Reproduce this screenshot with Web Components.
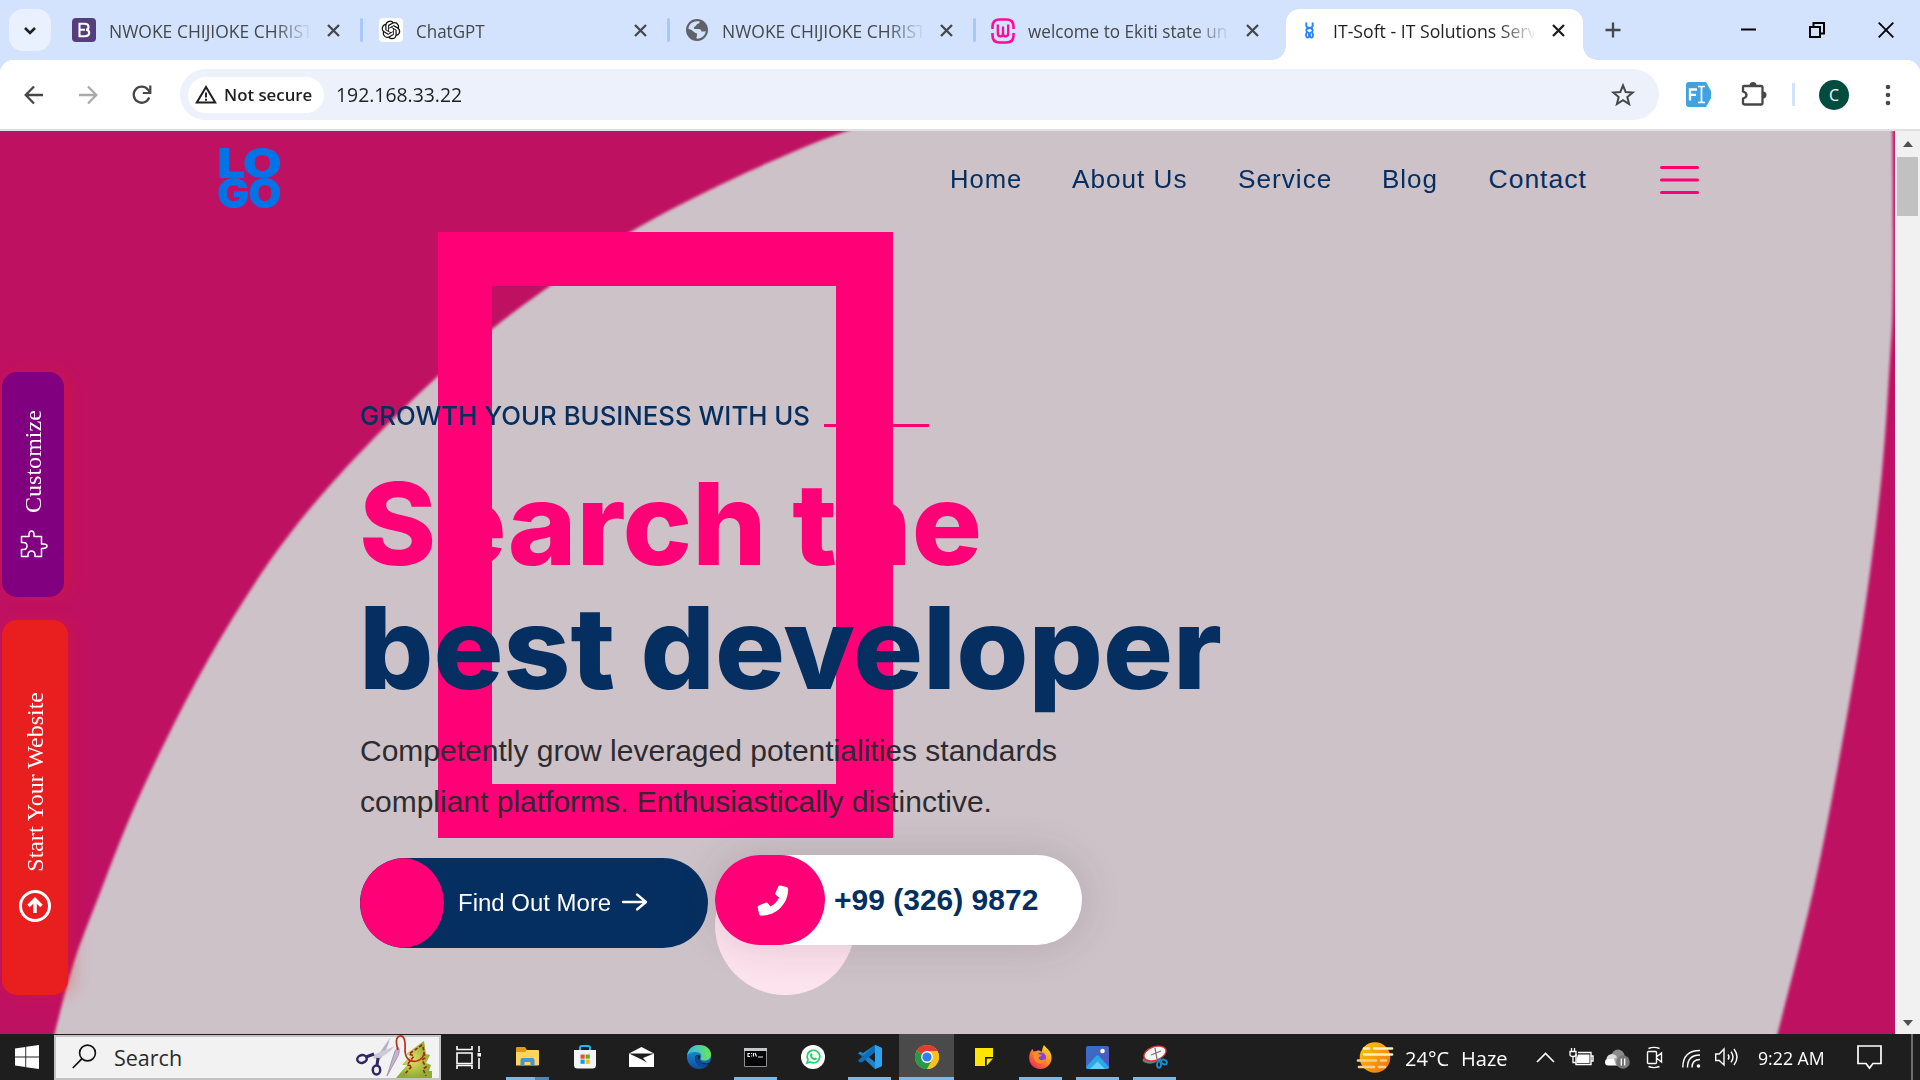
<!DOCTYPE html>
<html lang="en">
<head>
<meta charset="utf-8">
<title>IT-Soft - IT Solutions Services</title>
<style>
html,body{margin:0;width:1920px;height:1080px;overflow:hidden;background:#fff}
</style>
</head>
<body>
<desktop-screen></desktop-screen>
<script>
const define=(name,html,setup)=>customElements.define(name,class extends HTMLElement{
  connectedCallback(){
    if(this.shadowRoot)return;
    const t=document.createElement('template');
    t.innerHTML=typeof html==='function'?html(this):html;
    this.attachShadow({mode:'open'}).append(t.content.cloneNode(true));
    if(setup)setup(this,this.shadowRoot);
  }
});

/* Single line of text stretched to a known advance width. */
define('fit-text',`<style>:host{display:block;flex:none;white-space:nowrap}span{display:inline-block;transform-origin:0 50%}</style><span><slot></slot></span>`,
(el,root)=>{
  const w=+el.getAttribute('w');
  el.style.width=w+'px';
  const s=root.querySelector('span');
  s.style.transform=`scaleX(${w/s.offsetWidth})`;
});

const STROKE='fill="none" stroke="currentColor"';
const ICONS={
 chevron:[14,9,`<path d="M2 2l5 5 5-5" ${STROKE} stroke-width="2.6"/>`],
 close:[13,13,`<path d="M1 1l11 11M12 1L1 12" ${STROKE} stroke-width="2.3"/>`],
 boot:[24,24,`<rect width="24" height="24" rx="4" fill="#563d7c"/><path d="M7.5 5.8h5.2c5 0 4.700 5.500 1.400 5.900 4.400.5 4.200 6.500-1 6.500H7.500zM7.500 11.800h5.500" fill="none" stroke="#fff" stroke-width="2.100"/>`],
 gpt:[24,24,`<rect width="24" height="24" rx="4" fill="#fff"/><path transform="translate(2.600 2.600) scale(.78)" fill="#111" d="M22.2819 9.8211a5.9847 5.9847 0 0 0-.5157-4.9108 6.0462 6.0462 0 0 0-6.5098-2.9A6.0651 6.0651 0 0 0 4.9807 4.1818a5.9847 5.9847 0 0 0-3.9977 2.9 6.0462 6.0462 0 0 0 .7427 7.0966 5.98 5.98 0 0 0 .511 4.9107 6.051 6.051 0 0 0 6.5146 2.9001A5.9847 5.9847 0 0 0 13.2599 24a6.0557 6.0557 0 0 0 5.7718-4.2058 5.9894 5.9894 0 0 0 3.9977-2.9001 6.0557 6.0557 0 0 0-.7475-7.0729zm-9.022 12.6081a4.4755 4.4755 0 0 1-2.8764-1.0408l.1419-.0804 4.7783-2.7582a.7948.7948 0 0 0 .3927-.6813v-6.7369l2.02 1.1686a.071.071 0 0 1 .038.052v5.5826a4.504 4.504 0 0 1-4.4945 4.4944zm-9.6607-4.1254a4.4708 4.4708 0 0 1-.5346-3.0137l.142.0852 4.783 2.7582a.7712.7712 0 0 0 .7806 0l5.8428-3.3685v2.3324a.0804.0804 0 0 1-.0332.0615L9.74 19.9502a4.4992 4.4992 0 0 1-6.1408-1.6464zM2.3408 7.8956a4.485 4.485 0 0 1 2.3655-1.9728V11.6a.7664.7664 0 0 0 .3879.6765l5.8144 3.3543-2.0201 1.1685a.0757.0757 0 0 1-.071 0l-4.8303-2.7865A4.504 4.504 0 0 1 2.3408 7.8956zm16.5963 3.8558L13.1038 8.364 15.1192 7.2a.0757.0757 0 0 1 .071 0l4.8303 2.7913a4.4944 4.4944 0 0 1-.6765 8.1042v-5.6772a.79.79 0 0 0-.407-.667zm2.0107-3.0231l-.142-.0852-4.7735-2.7818a.7759.7759 0 0 0-.7854 0L9.409 9.2297V6.8974a.0662.0662 0 0 1 .0284-.0615l4.8303-2.7866a4.4992 4.4992 0 0 1 6.6802 4.66zM8.3065 12.863l-2.02-1.1638a.0804.0804 0 0 1-.038-.0567V6.0742a4.4992 4.4992 0 0 1 7.3757-3.4537l-.142.0805L8.704 5.459a.7948.7948 0 0 0-.3927.6813zm1.0976-2.3654l2.602-1.4998 2.6069 1.4998v2.9994l-2.5974 1.4997-2.6067-1.4997Z"/>`],
 globe:[22,22,`<circle cx="11" cy="11" r="11" fill="#5f6368"/><path d="M2.500 10c0-4 3.500-7.700 8.500-7.700h2.500c.5 1.700-.5 2.200-2 2.700-1.500.5-1 2-2.500 2.500S7.500 9 8.500 10h4c2 0 3 1 3 2.500h2.500c1 0 1.500-.5 1.700-1.500C20 16 16 19.700 11 19.700c-1-.7-.5-2.200 0-2.700v-2.500c-1 0-2-1-3-1.500S5.500 10 2.500 10z" fill="#d3e3fd"/>`],
 wlogo:[24,26,`<g fill="none" stroke="#ff0a9c" stroke-width="2.600"><path d="M1.500 11V8.500Q1.500 1.500 8.500 1.500h7q7 0 7 7V11M1.500 15v2.500q0 7 7 7h7q7 0 7-7V15"/><path d="M6.800 6.500V15q0 3.500 2.600 3.500T12 15V8.500V15q0 3.500 2.600 3.500T17.200 15V6.500" stroke-width="2.300"/></g>`],
 itsoft:[9,17,`<g fill="none" stroke="#2a86ef" stroke-width="1.900"><path d="M1.300.500v3.200q0 1.800 3.200 2.300T7.700 8.300Q7.500 10 6.200 10M7.700.500v3.200q0 1.800-3.200 2.300T1.300 8.300Q1.500 10 2.800 10"/><ellipse cx="2.600" cy="13" rx="1.500" ry="2.600"/><ellipse cx="6.400" cy="13" rx="1.500" ry="2.600"/></g>`],
 plus:[16,16,`<path d="M8 0.500v15M0.500 8h15" ${STROKE} stroke-width="2.300"/>`],
 min:[15,15,`<path d="M0 7.500h15" ${STROKE} stroke-width="2"/>`],
 restore:[16,16,`<path d="M1 5h10v10H1zM4.500 4.500V1H15v10.500h-3.500" ${STROKE} stroke-width="2"/>`],
 winclose:[16,16,`<path d="M.7.700l14.600 14.600M15.300.700L.700 15.300" ${STROKE} stroke-width="1.900"/>`],
 back:[20,20,`<path d="M19 10H2M10 1.500L1.700 10l8.300 8.500" ${STROKE} stroke-width="2.300"/>`],
 fwd:[20,20,`<path d="M1 10h17M10 1.500l8.300 8.500-8.300 8.500" ${STROKE} stroke-width="2.300"/>`],
 reload:[20,20,`<path d="M17.200 12.500A8 8 0 1 1 15.800 4.500L18 7" ${STROKE} stroke-width="2.300"/><path d="M18.300.500v7.500h-7.500" ${STROKE} stroke-width="2.200"/>`],
 warn:[22,19,`<path d="M11 2L1.800 17.500h18.400z" ${STROKE} stroke-width="2"/><path d="M11 7.500v5M11 13.700v2" ${STROKE} stroke-width="1.900"/>`],
 star:[24,23,`<path d="M12 2.500l2.700 6.600 7 .5-5.400 4.500 1.800 6.900L12 17.200 5.900 21l1.800-6.900L2.300 9.600l7-.5z" ${STROKE} stroke-width="2"/>`],
 fi:[25,25,`<path d="M3 0h17l5 9v7l-5 9H3q-3 0-3-3V3q0-3 3-3z" fill="#41a2e1"/><path d="M4 18.500V7.500h7M4 12.800h6" fill="none" stroke="#fff" stroke-width="2.300"/><path d="M12 4.500h2q1.500 0 1.500 2v12q0 2-1.500 2h-2M19 4.500h-2q-1.500 0-1.500 2M19 20.500h-2q-1.500 0-1.500-2" fill="none" stroke="#fff" stroke-width="1.700"/>`],
 ext:[26,26,`<path d="M3 5h17q1.500 0 1.500 1.500V22q0 1.500-1.500 1.500H4q-2 0-2-1.500v-4.500q3.500-1 3.500-3.500T2 10.500V6q0-1 1-1z" ${STROKE} stroke-width="2.300"/><path d="M8.500 4.500a3.500 3.500 0 0 1 7 0zM22 10.500a3.500 3.500 0 0 1 0 7z" fill="currentColor"/>`],
 dots:[6,22,`<circle cx="3" cy="3" r="2.300" fill="currentColor"/><circle cx="3" cy="11" r="2.300" fill="currentColor"/><circle cx="3" cy="19" r="2.300" fill="currentColor"/>`],
 burger:[40,28,`<g fill="#ff0076"><rect y="0" width="39" height="3" rx="1.500"/><rect y="12.500" width="39" height="3" rx="1.500"/><rect y="25" width="39" height="3" rx="1.500"/></g>`],
 puzzle:[28,28,`<path d="M1.500 6.500H9V4.500q0-3.500 2.500-3.500t2.500 3.500v2h7.500V14h2q3.500 0 3.500 2t-3.500 2.500h-2v8H15v-2q-.5-3.500-3.500-3.500T8 24.500v2H1.500v-7h2q3.500 0 3.500-3.500t-3.500-3.500h-2z" ${STROKE} stroke-width="1.500" stroke-linejoin="round"/>`],
 up:[32,32,`<circle cx="16" cy="16" r="14.500" ${STROKE} stroke-width="3"/><path d="M16 23V10M9.500 16L16 9.500l6.500 6.500" ${STROKE} stroke-width="3.500"/>`],
 arrow:[26,20,`<path d="M1 10h22M15 2.500l9 7.500-9 7.500" ${STROKE} stroke-width="2.300" stroke-linecap="round" stroke-linejoin="round"/>`],
 phone:[32,31,`<path d="M23.500.600L29.500 2q1.700.500 1.700 2.200C31 19 19.500 30.500 4.200 30.700q-1.700 0-2.100-1.700L.700 22.700q-.300-1.500 1.200-2.200l6.700-2.800q1.300-.500 2.300.600l2.500 3.200c4-2 7-5 8.700-8.900l-3.100-2.500q-1.100-1-.500-2.300L21.300 1.600q.700-1.300 2.200-1z" fill="#fff"/>`],
 win:[24,24,`<path d="M0 3.500L10.300 2v9.500H0zM11.200 1.800L24 0v11.500H11.200zM0 12.400h10.300V22L0 20.500zM11.200 12.400H24V24l-12.800-1.800z" fill="#fff"/>`],
 mag:[25,25,`<circle cx="15.500" cy="9" r="7.900" fill="none" stroke="#111" stroke-width="1.600"/><path d="M10 14.600L.800 24" stroke="#111" stroke-width="1.700"/>`],
 xmas:[80,44,`<defs><radialGradient id="t" cx=".45" cy=".5"><stop offset="0" stop-color="#e6de68"/><stop offset="1" stop-color="#8fae2e"/></radialGradient></defs>
  <path d="M68 6l-18 13 4 2-8 9 5 0-11 13h36l0-7-3 0 2-6-5-2 4-8-4-1z" fill="url(#t)"/><path d="M66 10l-13 9 5 2-7 9 5 1-8 9M67 12l2 11-3 2 4 7-3 2 3 7" fill="none" stroke="#a02318" stroke-width="1.600" stroke-dasharray="3.500 2"/>
  <path d="M34 3L20 23l3 3Q31 16 34 3z" fill="#b3b1c4"/><path d="M39 11L17 20l1 4Q30 22 39 11z" fill="#cccad8"/><ellipse cx="6" cy="24" rx="4.800" ry="3.800" fill="none" stroke="#302767" stroke-width="2.500" transform="rotate(-15 6 24)"/><ellipse cx="20.500" cy="35" rx="3.700" ry="4.500" fill="none" stroke="#302767" stroke-width="2.500"/><path d="M10 22l8-3M21 30l1-7" stroke="#302767" stroke-width="3"/>
  <path d="M42 12q2.500 3 0 9L31 41l6-19q2-8 5-10z" fill="#c6b3cf" stroke="#8f7ba0" stroke-width=".7"/><path d="M42 15Q38 2 44 1t5 15q1 12 12 10 7-2 7-9" fill="none" stroke="#c22a20" stroke-width="1.700"/>`],
 taskview:[25,23,`<g fill="none" stroke="#fff" stroke-width="1.600"><path d="M1 0v3.500h15V0M1 7h15v10.500H1zM1 23v-3.500h15V23M23 0v6M23 12v11"/></g><rect x="21.500" y="7" width="3.500" height="3.500" fill="#fff"/>`],
 folder:[24,20,`<path d="M0 1q0-1 1-1h8l2 3h11v5H0z" fill="#e29a12"/><path d="M0 5h9l2-2h11q1 0 1 1v13.500q0 1-1 1H0z" fill="#ffd35c"/><path d="M4.500 18.500V13q0-2 2-2h10q2 0 2 2v5.500h-4V15h-6v3.500z" fill="#3f96dc"/>`],
 store:[24,24,`<path d="M7 7V3q0-2 2-2h6q2 0 2 2v4" fill="none" stroke="#23b7ee" stroke-width="2"/><path d="M1 5h22v15q0 3.500-3.500 3.500h-15Q1 23.500 1 20z" fill="#f4f4f5"/><path d="M7.500 9.500h4.200v4.200H7.500z" fill="#f25022"/><path d="M12.600 9.500h4.200v4.200h-4.200z" fill="#5fb21c"/><path d="M7.500 14.600h4.200v4.200H7.500z" fill="#00a4ef"/><path d="M12.600 14.600h4.200v4.200h-4.200z" fill="#ffb900"/>`],
 mail:[25,20,`<path d="M0 6.500L12.500 0 25 6.500V20H0z" fill="#fff"/><path d="M0 6.500h25L14 11l4 4.500L11.500 12z" fill="#1e1e1e"/>`],
 edge:[24,24,`<defs><linearGradient id="e1"><stop stop-color="#33b8e8"/><stop offset="1" stop-color="#6be35c"/></linearGradient><linearGradient id="e2" y2="1" x2="0"><stop stop-color="#1b9de2"/><stop offset="1" stop-color="#0d4f9f"/></linearGradient></defs><circle cx="12" cy="12" r="12" fill="url(#e2)"/><path d="M0 11C1 3 7 0 12 0c8 0 12 5 12 9.500 0 4-3 6-6.500 6S13 14 14 12.500c1-2.500-.5-5.500-5-5.500S1 8.500 0 11z" fill="url(#e1)"/><path d="M8 13c0 5 4 9 9 8.500 2-.2 4-1.200 5-2.500l1-2c-3 2-8 1.500-10-1-1.500-2 1-3.500 0-5.500-2-1.500-5-.5-5 2.500z" fill="#1e1e1e" opacity=".9"/><path d="M8 13c0 5 4 9 9 8.500 2-.2 4-1.200 5-2.500-3 1-7 0-9-2.500S10 12 12 10c-2 0-4 1-4 3z" fill="#104a91"/>`],
 cmd:[23,19,`<rect width="23" height="19" rx="1" fill="#8b8d90"/><rect x="0" width="23" height="3" fill="#c4c6c9"/><rect x="1" y="3" width="21" height="15" fill="#050505"/><path d="M6 5.500H4v3h2M7.500 5v1M7.500 7.500v1M9.500 5v3.500M11 5l1.500 3.500M14 9h5" fill="none" stroke="#eee" stroke-width="1.200"/>`],
 wa:[24,24,`<circle cx="12" cy="12" r="12" fill="#fff"/><path d="M6 18l1-3.300A6.300 6.300 0 1 1 9.300 17z" fill="none" stroke="#25d366" stroke-width="1.700"/><path d="M9.700 8.500q1-1 1.500.5l.4 1-.7 1q.8 1.700 2.400 2.300l1-.9 1.700.9q-.2 2-2.200 1.900-4.300-.7-4.900-4.700z" fill="#25d366"/>`],
 vscode:[24,24,`<path d="M17 0l6 2.500q1 .5 1 1.500v16q0 1-1 1.500L17 24 2.500 10.500 0 8.500l2-2L5 8z" fill="#1a85cd"/><path d="M17 0v24l6-2.500q1-.5 1-1.500V4q0-1-1-1.500z" fill="#2aa5f3"/><path d="M17 7v10l-6.500-5z" fill="#1e1e1e"/><path d="M2 17.500L0 15.500 17 0v7L4.500 17z" fill="#0b6fb8"/><path d="M1 9L6.500 12 2.500 10.500z" fill="#1e1e1e"/>`],
 chrome:[24,24,`<circle cx="12" cy="12" r="12" fill="#fbc116"/><path d="M12 12L1.600 6A12 12 0 0 1 22.400 6H12z" fill="#e33b2e"/><path d="M12 12L1.600 6A12 12 0 0 0 12 24l5.200-9z" fill="#269a48"/><path d="M12 6h10.400A12 12 0 0 1 12 24l5.200-9z" fill="#fbc116"/><circle cx="12" cy="12" r="5.900" fill="#fff"/><circle cx="12" cy="12" r="4.600" fill="#317cf3"/>`],
 sticky:[18,18,`<path d="M0 0h18v9h-8v9H0z" fill="#ffe500"/><path d="M11.500 10.500H18L11.500 18z" fill="#ffe500"/><path d="M10 9h8l-6.500 1.500V18H10z" fill="#111"/>`],
 firefox:[23,24,`<defs><linearGradient id="f" x1="1" x2=".2" y2="1"><stop stop-color="#fff03f"/><stop offset=".45" stop-color="#ff9a1f"/><stop offset="1" stop-color="#f5245c"/></linearGradient></defs><path d="M15 0c1 2 5 4 7 9 2.500 8-3 15-10.500 15S-.5 18 .2 11C.6 8 2 5.500 3.500 4l1 2.500L7.500 6c2-1 4 0 5 1 1-2 1-5 2.500-7z" fill="url(#f)"/><circle cx="12" cy="12.500" r="5" fill="#7b45d6"/><path d="M4 8c3-1 5 0 6 1.500L13 10c-1 1.500-3 1.500-3.500 3 .5 2.500 5 3 6.500.5C16 18 12 19.500 9 18c-3-1-5-5-5-10z" fill="#ff8a2a"/>`],
 photos:[23,23,`<defs><linearGradient id="p" y2="1"><stop stop-color="#3373c9"/><stop offset="1" stop-color="#5c4fb7"/></linearGradient></defs><rect width="23" height="23" rx="2" fill="url(#p)"/><path d="M0 21L10 10q1.500-1.500 3 0l10 11q0 2-2 2H2q-2 0-2-2z" fill="#28a9e8"/><path d="M4 23l7.500-7.500L19 23z" fill="#65d2f5"/><circle cx="16.500" cy="5" r="2.300" fill="#fff"/>`],
 snip:[26,24,`<ellipse cx="8" cy="15" rx="7.500" ry="3.700" fill="#777"/><ellipse cx="13" cy="8.500" rx="11.500" ry="6.700" fill="#f5f5f5" stroke="#d33a35" stroke-width="1.300" transform="rotate(-20 13 8.500)"/><path d="M9 10l10-4M13 3l2 11" stroke="#777" stroke-width="1.300"/><g fill="none" stroke="#2189d0" stroke-width="1.900"><ellipse cx="17" cy="19.500" rx="2" ry="3.200"/><ellipse cx="22" cy="17" rx="3" ry="2.200" transform="rotate(30 22 17)"/><path d="M16 16l3-2.500"/></g>`],
 haze:[36,31,`<defs><linearGradient id="h" y2="1"><stop stop-color="#ffcb0c"/><stop offset="1" stop-color="#ef6c0b"/></linearGradient></defs><circle cx="18" cy="15.500" r="15.300" fill="url(#h)"/><g stroke-linecap="round" stroke-width="2.700"><path d="M7 6.500h5M17 6.500h18M7 12.500h28" stroke="#fff0be"/><path d="M1 18.500h18M24 18.500h5M2 25h15M22 25h6" stroke="#f5cd8c"/></g>`],
 caret:[19,11,`<path d="M1 10l8.500-8.500L18 10" ${STROKE} stroke-width="1.600"/>`],
 battery:[25,18,`<path d="M7 6V16.500h15V4.500H9M22.500 8H24v5h-1.500" ${STROKE} stroke-width="1.400"/><path d="M9 6.500h11.500v8.500H7.500V11z" fill="#fff"/><path d="M1 3.500h6v3q0 2-3 2T1 6.500zM2.500 3.500V0M5.500 3.500V0M4 9v5.500h3" fill="none" stroke="#fff" stroke-width="1.300"/>`],
 cloud:[25,20,`<circle cx="13" cy="7" r="6.500" fill="#8c8c8c"/><circle cx="7" cy="10.500" r="5.500" fill="#ddd"/><rect x="0" y="10" width="19" height="6.500" rx="3.200" fill="#fff"/><path d="M9 10q4-4 9-1l2 7H11z" fill="#aaa"/><circle cx="18" cy="13" r="6.800" fill="#777"/><path d="M16.300 9.500v7M19.700 9.500v7" stroke="#fff" stroke-width="1.300"/>`],
 meet:[17,23,`<path d="M1.500 6.500q0-1 1-1h7q1 0 1 1v10q0 1-1 1h-7q-1 0-1-1zM11 10.500L15.500 7v9L11 12.500M2.500 2.500Q8 .300 13.500 2.500M2.500 20.500Q8 22.700 13.500 20.500" ${STROKE} stroke-width="1.400"/>`],
 wifi:[19,19,`<path d="M.800 18.500Q.800 1.500 18 1.500M5.500 18.500Q5.500 6 18 6M10 18.500q0-8 8-8" ${STROKE} stroke-width="1.400"/><circle cx="16.500" cy="17" r="1.800" fill="#fff"/>`],
 speaker:[23,18,`<path d="M.700 6h3.500L9 1v16L4.200 12.500H.700zM13 6.500q2 2.500 0 5M16 3.700q4 5.300 0 10.600M19 1q6 8 0 16" ${STROKE} stroke-width="1.400"/>`],
 notif:[25,24,`<path d="M1 1h23v17.500h-8L12.500 23 9 18.500H1z" ${STROKE} stroke-width="1.700"/>`]
};
define('g-icon',el=>{const [w,h,b]=ICONS[el.getAttribute('name')];
 return `<style>:host{display:block;flex:none;width:${w}px;height:${h}px}svg{display:block;overflow:visible}</style><svg width="${w}" height="${h}" viewBox="0 0 ${w} ${h}">${b}</svg>`});

define('browser-tab',el=>`<style>
:host{display:flex;align-items:center;box-sizing:border-box;width:306px;height:42px;flex:none;color:#45474a;font:18px "Open Sans",sans-serif}
.fav{width:24px;height:24px;display:grid;place-items:center;margin-left:15px;flex:none}
.label{width:202px;margin-left:13px;margin-top:2px;line-height:43px;overflow:hidden;-webkit-mask:linear-gradient(90deg,#000 165px,transparent 203px);mask:linear-gradient(90deg,#000 165px,transparent 203px)}
g-icon[name=close]{margin-left:18px}
i{width:3px;height:24px;background:#a8c7fa;border-radius:2px;margin-left:20px}
${el.dataset.active?`:host{width:297px;height:51px;background:#fff;border-radius:14px 14px 0 0;color:#1f1f1f;position:relative;padding-bottom:9px;margin-left:1px}
.fav{margin-left:11px}.label{margin-left:12px;width:201px}i{display:none}
:host::before,:host::after{content:"";position:absolute;bottom:0;width:14px;height:14px}
:host::before{left:-14px;background:radial-gradient(circle at 0 0,transparent 13.5px,#fff 14px)}:host::after{right:-14px;background:radial-gradient(circle at 100% 0,transparent 13.5px,#fff 14px)}`:''}
${el.dataset.last?'i{visibility:hidden}':''}
</style><div class="fav"><g-icon name="${el.dataset.icon}"></g-icon></div><div class="label"><slot></slot></div><g-icon name="close"></g-icon><i></i>`);

define('tab-strip',`<style>
:host{display:flex;height:60px;background:#d3e3fd;padding-top:9px;box-sizing:border-box;color:#1f1f1f}
.menu{width:42px;height:42px;border-radius:14px;background:#e9f0fe;display:grid;place-items:center;margin:0 6px 0 9px;flex:none}
.c{height:42px;display:flex;align-items:center}
</style>
<div class="menu"><g-icon name="chevron"></g-icon></div>
<browser-tab data-icon="boot"><fit-text w="204">NWOKE CHIJIOKE CHRIST</fit-text></browser-tab>
<browser-tab data-icon="gpt" style="margin-left:1px"><fit-text w="69">ChatGPT</fit-text></browser-tab>
<browser-tab data-icon="globe"><fit-text w="204">NWOKE CHIJIOKE CHRIST</fit-text></browser-tab>
<browser-tab data-icon="wlogo" data-last="1"><fit-text w="199">welcome to Ekiti state un</fit-text></browser-tab>
<browser-tab data-icon="itsoft" data-active="1" style="margin-left:4px"><fit-text w="203">IT-Soft - IT Solutions Serv</fit-text></browser-tab>
<div class="c"><g-icon name="plus" style="margin-left:22px;color:#45474a"></g-icon>
<g-icon name="min" style="margin-left:120px;margin-top:-2px;color:#000"></g-icon><g-icon name="restore" style="margin-left:53px;margin-top:-1px;color:#000"></g-icon><g-icon name="winclose" style="margin-left:53px;margin-top:-1px;color:#000"></g-icon></div>`);

define('tool-bar',`<style>
:host{display:flex;align-items:center;box-sizing:border-box;height:71px;border-bottom:2px solid #dfe1e0;color:#474747;font:20px "Open Sans",sans-serif;background:radial-gradient(circle at 14px 14px,#fff 14px,#d3e3fd 14.500px) 0 0/14px 14px no-repeat,radial-gradient(circle at 0 14px,#fff 14px,#d3e3fd 14.500px) 100% 0/14px 14px no-repeat,#fff}
.box{display:flex;align-items:center;width:1479px;height:51px;border-radius:26px;background:#ecf1fb;margin-left:28px;flex:none;color:#1f1f1f;box-sizing:border-box;padding-left:8px}
.chip{display:flex;align-items:center;width:136px;height:36px;border-radius:18px;background:#fff;font-size:17px;font-weight:600;box-sizing:border-box;padding-left:7px;gap:7px}
.av{width:30px;height:30px;border-radius:50%;background:#004d40;color:#fff;display:grid;place-items:center;font-size:16px;margin-left:24px}
.sep{width:3px;height:23px;background:#d3e3fd;margin-left:25px}
</style>
<g-icon name="back" style="margin-left:24px"></g-icon><g-icon name="fwd" style="margin-left:34px;color:#aaa"></g-icon><g-icon name="reload" style="margin-left:34px"></g-icon>
<div class="box"><div class="chip"><g-icon name="warn"></g-icon><fit-text w="88">Not secure</fit-text></div><fit-text w="126" style="margin-left:12px">192.168.33.22</fit-text><g-icon name="star" style="margin-left:1149px;color:#474747"></g-icon></div>
<g-icon name="fi" style="margin-left:27px"></g-icon><g-icon name="ext" style="margin-left:30px;margin-top:-2px"></g-icon><div class="sep"></div><div class="av">C</div><g-icon name="dots" style="margin-left:36px"></g-icon>`);

/* Smooth path through a list of points. */
function curve(p){
  let d='';
  for(let i=0;i<p.length-1;i++){
    const a=p[i-1]||p[i],b=p[i],c=p[i+1],e=p[i+2]||c;
    d+=`C${b[0]+(c[0]-a[0])/6} ${b[1]+(c[1]-a[1])/6} ${c[0]-(e[0]-b[0])/6} ${c[1]-(e[1]-b[1])/6} ${c[0]} ${c[1]}`;
  }
  return d;
}
define('page-backdrop',()=>{
 const L=[[48,1064],[54,1036],[74,962],[100,893],[131,815],[167,738],[208,660],[255,583],[292,531],[333,482],[387,425],[438,376],[492,329],[550,286],[632,231],[722,184],[800,149],[852,129],[920,104]];
 const R=[[1892,100],[1892.500,131],[1893,230],[1892.500,310],[1890,360],[1882,472],[1866,601],[1844.500,730],[1815,883],[1777,1036],[1769,1064]];
 return `<style>:host{position:absolute;inset:0;overflow:hidden}svg{display:block}</style>
 <svg width="1895" height="903" viewBox="0 131 1895 903"><defs><filter id="b" x="-5%" y="-5%" width="110%" height="110%"><feGaussianBlur stdDeviation="1.800"/></filter></defs>
 <rect y="131" width="1895" height="903" fill="#bf1162"/><path filter="url(#b)" fill="#cdc2c8" d="M48 1064${curve(L)}L1892 100${curve(R)}Z"/></svg>`});

define('site-nav',`<style>
:host{display:flex;align-items:center;height:96px;position:relative;color:#052f60;font:26.500px "Liberation Sans",Arial,sans-serif;letter-spacing:1px}
.logo{color:#0073e6;font:900 40.500px/30px Inter,sans-serif;letter-spacing:-1px;margin:0 0 0 217px;width:63px;flex:none}
nav{display:flex;margin-left:669.500px;gap:50.250px}
</style><div class="logo"><fit-text w="63.500">LO</fit-text><fit-text w="63.500">GO</fit-text></div>
<nav><fit-text w="72.500">Home</fit-text><fit-text w="115.500">About Us</fit-text><fit-text w="94">Service</fit-text><fit-text w="56">Blog</fit-text><fit-text w="98">Contact</fit-text></nav><g-icon name="burger" style="margin-left:73px;margin-top:2px"></g-icon>`);

define('side-tab',`<style>
:host{display:flex;flex-direction:column;align-items:center;box-sizing:border-box;border-radius:15px;color:#fff;font:24px/28px "Liberation Serif",serif;box-shadow:6px 0 16px rgba(233,30,30,.28)}
.t{writing-mode:vertical-rl;transform:rotate(180deg);white-space:nowrap;flex:none}
</style><div class="t"><slot></slot></div><slot name="icon"></slot>`);

define('hero-block',`<style>
:host{display:block;position:relative;padding:169px 0 0 360px;color:#052f60}
.frame{position:absolute;left:438px;top:5px;width:344px;height:498px;border:solid #ff0076;border-width:54px 57px 54px 54.500px}
.in{position:relative}
.sub{display:flex;align-items:center;font:500 26px/40px Inter,sans-serif}
.sub i{width:105px;height:3px;background:#ff0076;margin:18px 0 0 14px}
h1{font:800 113.500px/124px Inter,sans-serif;margin:26px 0 0 -1.500px}
.pink{color:#ff0076}
p{font:30px/51px "Liberation Sans",Arial,sans-serif;color:#2d2b2f;margin:15px 0 28px}
.row{display:flex;align-items:flex-start;gap:7px}
.b1{display:flex;align-items:center;width:348px;height:90px;margin-top:3px;border-radius:45px;background:#052f60;color:#fff;font:23.500px "Liberation Sans",Arial,sans-serif;overflow:hidden}
.b1 b{width:84px;height:90px;border-radius:42px/45px;background:#ff0076;flex:none}
.call{position:relative;width:367px}
.disc{position:absolute;left:0;top:0;width:140px;height:140px;border-radius:50%;background:#fde3ee}
.b2{position:relative;display:flex;align-items:center;height:90px;border-radius:45px;background:#fff;box-shadow:0 0 40px rgba(80,50,70,.18);font:bold 30px "Liberation Sans",Arial,sans-serif}
.b2 b{width:110px;height:90px;border-radius:45px;background:#ff0076;display:flex;align-items:center;box-sizing:border-box;padding-left:42px;flex:none}
</style>
<div class="frame"></div>
<div class="in"><div class="sub"><fit-text w="450">GROWTH YOUR BUSINESS WITH US</fit-text><i></i></div>
<h1><fit-text class="pink" w="623">Search the</fit-text><fit-text w="863">best developer</fit-text></h1>
<p><fit-text w="697">Competently grow leveraged potentialities standards</fit-text><fit-text w="632">compliant platforms. Enthusiastically distinctive.</fit-text></p>
<div class="row"><div class="b1"><b></b><fit-text w="153" style="margin-left:14px">Find Out More</fit-text><g-icon name="arrow" style="margin-left:11px;margin-top:-2px"></g-icon></div>
<div class="call"><div class="disc"></div><div class="b2"><b><g-icon name="phone"></g-icon></b><fit-text w="204" style="margin-left:9px">+99 (326) 9872</fit-text></div></div></div></div>`);

define('scroll-bar',`<style>
:host{display:flex;flex-direction:column;align-items:center;width:25px;flex:none;background:#f1f1f1;box-sizing:border-box;padding:10px 0 8px}
.u,.d{border:5.500px solid transparent}
.u{border-bottom:6px solid #505050;border-top:0}.d{border-top:6px solid #505050;border-bottom:0;margin-top:auto}
.th{width:21px;height:59px;background:#c1c1c1;margin-top:10px}
</style><div class="u"></div><div class="th"></div><div class="d"></div>`);

define('web-page',`<style>
:host{display:flex;height:903px}
main{position:relative;width:1895px;height:903px;overflow:hidden}
aside{position:absolute;left:2px;top:241px;display:flex;flex-direction:column;gap:23px}
.a{width:62px;height:225px;background:#800080;padding:38px 0 0 0}
.b{width:66px;height:375px;background:#e91e1f;padding-top:72px}
</style><main><page-backdrop></page-backdrop><site-nav></site-nav><hero-block></hero-block>
<aside><side-tab class="a"><span style="letter-spacing:.05px">Customize</span><g-icon slot="icon" name="puzzle" style="margin:17px 0 0 1px"></g-icon></side-tab>
<side-tab class="b"><span>Start Your Website</span><g-icon slot="icon" name="up" style="margin-top:18px"></g-icon></side-tab></aside></main><scroll-bar></scroll-bar>`);

define('task-button',el=>`<style>:host{display:flex;flex-direction:column;align-items:center;width:57px;height:46px;flex:none;position:relative}
.i{height:46px;display:grid;place-items:center;${el.dataset.active?'width:55px;background:#4a4a4a':''}}
${el.dataset.open?`:host::after{content:"";position:absolute;bottom:0;left:${el.dataset.active?1:7}px;width:${el.dataset.active?55:43}px;height:3px;background:${el.dataset.open==='2'?'linear-gradient(90deg,#76b9ed 29px,#4e86b5 29px)':'#76b9ed'}}`:''}
</style><div class="i"><g-icon name="${el.dataset.icon}"></g-icon></div>`);

define('task-bar',`<style>
:host{display:flex;align-items:center;height:46px;background:#1e1e1e;color:#fff;font:20.500px "Open Sans",sans-serif}
.s{display:flex;align-items:center;width:387px;height:45px;box-sizing:border-box;border:2px solid #c3c3c3;background:#f2f2f2;color:#2b2b2b;margin-left:15px;padding-left:16px;font-size:21.500px;flex:none}
.apps{display:flex;margin-left:-1px}
.end{width:2px;height:46px;background:#6b6b6b;margin-left:29px}
</style><g-icon name="win" style="margin-left:15px"></g-icon>
<div class="s"><g-icon name="mag" style="margin-top:-2px"></g-icon><fit-text w="68" style="margin-left:17px;margin-top:1px">Search</fit-text><g-icon name="xmas" style="margin-left:174px"></g-icon></div>
<div class="apps"><task-button data-icon="taskview"></task-button><task-button style="margin-left:2px" data-icon="folder" data-open="2"></task-button><task-button data-icon="store"></task-button><task-button data-icon="mail"></task-button><task-button data-icon="edge"></task-button><task-button data-icon="cmd" data-open="1"></task-button><task-button data-icon="wa"></task-button><task-button data-icon="vscode" data-open="1"></task-button><task-button data-icon="chrome" data-open="1" data-active="1"></task-button><task-button data-icon="sticky"></task-button><task-button data-icon="firefox" data-open="1"></task-button><task-button data-icon="photos" data-open="1"></task-button><task-button data-icon="snip" data-open="1"></task-button></div>
<g-icon name="haze" style="margin-left:174px"></g-icon><fit-text w="44" style="margin-left:12px;margin-top:2px">24°C</fit-text><fit-text w="47" style="margin-left:12px;margin-top:2px">Haze</fit-text>
<g-icon name="caret" style="margin-left:28px"></g-icon><g-icon name="battery" style="margin-left:14px"></g-icon><g-icon name="cloud" style="margin-left:11px;margin-top:4px"></g-icon><g-icon name="meet" style="margin-left:16px"></g-icon><g-icon name="wifi" style="margin-left:19px;margin-top:3px"></g-icon><g-icon name="speaker" style="margin-left:14px"></g-icon>
<fit-text w="67" style="margin-left:20px;font-size:18.500px">9:22 AM</fit-text><g-icon name="notif" style="margin-left:32px"></g-icon><div class="end"></div>`);

define('desktop-screen',`<style>:host{display:flex;flex-direction:column;width:1920px;height:1080px;overflow:hidden}</style><tab-strip></tab-strip><tool-bar></tool-bar><web-page></web-page><task-bar></task-bar>`);
</script>
</body>
</html>
